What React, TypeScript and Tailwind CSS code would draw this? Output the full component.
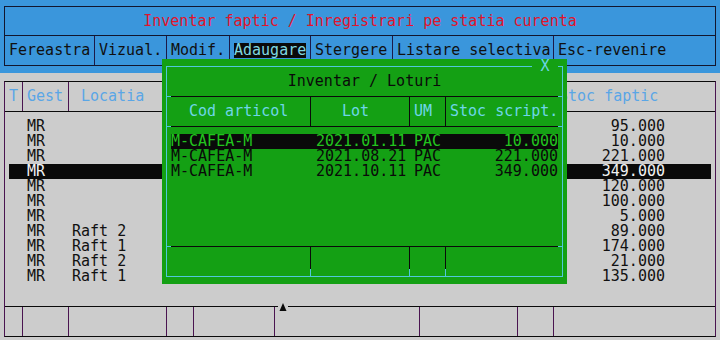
import React from "react";

const menu = [
  { label: "Fereastra", w: "w-[90px]" },
  { label: "Vizual.", w: "w-[72px]" },
  { label: "Modif.", w: "w-[63px]" },
  { label: "Adaugare", w: "w-[81px]", active: true },
  { label: "Stergere", w: "w-[82px]" },
  { label: "Listare selectiva", w: "w-[161px]" },
];

const stock = [
  { gest: "MR", loc: "", qty: "95.000" },
  { gest: "MR", loc: "", qty: "10.000" },
  { gest: "MR", loc: "", qty: "221.000" },
  { gest: "MR", loc: "", qty: "349.000" },
  { gest: "MR", loc: "", qty: "120.000" },
  { gest: "MR", loc: "", qty: "100.000" },
  { gest: "MR", loc: "", qty: "5.000" },
  { gest: "MR", loc: "Raft 2", qty: "89.000" },
  { gest: "MR", loc: "Raft 1", qty: "174.000" },
  { gest: "MR", loc: "Raft 2", qty: "21.000" },
  { gest: "MR", loc: "Raft 1", qty: "135.000" },
];

const lots = [
  { cod: "M-CAFEA-M", lot: "2021.01.11", um: "PAC", stoc: "10.000" },
  { cod: "M-CAFEA-M", lot: "2021.08.21", um: "PAC", stoc: "221.000" },
  { cod: "M-CAFEA-M", lot: "2021.10.11", um: "PAC", stoc: "349.000" },
];

// footer column widths of the main grid (each includes its right border)
const footerCols = ["w-[18px]", "w-[46px]", "w-[98px]", "w-[27px]", "w-[81px]", "w-[145px]", "w-[98px]", "w-[36px]"];

function Rule() {
  return (
    <div className="flex h-px">
      <div className="w-[4px] bg-[#50c8dc]" />
      <div className="flex-1 bg-[#0a0a0a]" />
      <div className="w-[4px] bg-[#50c8dc]" />
    </div>
  );
}

function FootSep() {
  return (
    <div className="flex w-px flex-col">
      <div className="h-[22px] bg-[#0a0a0a]" />
      <div className="flex-1 bg-[#50c8dc]" />
    </div>
  );
}

function LotsDialog() {
  return (
    <div className="absolute left-[162px] top-[59px] h-[225px] w-[405px] bg-[#14a014] pt-[7px] pl-[4px]">
      <div className="relative flex h-[211px] w-[397px] flex-col border border-[#50c8dc]">
        <span className="absolute left-[365px] top-[-8px] h-[15px] w-[26px] bg-[#14a014] text-center text-[#6fd6e8]">
          X
        </span>
        <div className="flex h-[29px] items-center justify-center text-[#0a0a0a]">Inventar / Loturi</div>
        <Rule />
        <div className="flex h-[29px] items-center text-[#6fd6e8]">
          <div className="flex h-full w-[144px] items-center border-r border-[#0a0a0a] pl-[22px]">Cod articol</div>
          <div className="flex h-full w-[99px] items-center border-r border-[#0a0a0a] pl-[31px]">Lot</div>
          <div className="flex h-full w-[36px] items-center border-r border-[#0a0a0a] pl-[4px]">UM</div>
          <div className="flex h-full flex-1 items-center pl-[4px]">Stoc script.</div>
        </div>
        <Rule />
        <div className="h-[119px] px-[4px] pt-[7px]">
          {lots.map((r, i) => (
            <div
              key={i}
              className={`flex h-[15px] whitespace-pre ${i === 0 ? "bg-[#0a0a0a] text-[#22c41e]" : "text-[#0a0a0a]"}`}
            >
              <span className="w-[145px]">{r.cod}</span>
              <span className="w-[98px]">{r.lot}</span>
              <span className="w-[36px]">{r.um}</span>
              <span className="flex-1 text-right">{r.stoc}</span>
            </div>
          ))}
        </div>
        <Rule />
        <div className="flex h-[29px]">
          <div className="w-[143px]" />
          <FootSep />
          <div className="w-[98px]" />
          <FootSep />
          <div className="w-[35px]" />
          <FootSep />
          <div className="flex-1" />
        </div>
      </div>
    </div>
  );
}

export default function App() {
  return (
    <div className="relative h-[340px] w-[720px] overflow-hidden bg-[#cccccc] font-['DejaVu_Sans_Mono','Liberation_Mono',monospace] text-[15px] leading-[15px] text-[#111111]">
      <div className="h-[73px] bg-[#3a96dc] pt-[6px] pl-[4px]">
        <div className="w-[712px] border border-[#12162e]">
          <div className="flex h-[29px] items-center justify-center border-b border-[#12162e] text-[#e0142c]">
            Inventar faptic / Inregistrari pe statia curenta
          </div>
          <div className="flex h-[29px] text-[#101010]">
            {menu.map((m) => (
              <div key={m.label} className={`flex items-center border-r border-[#1c1a48] pl-[4px] ${m.w}`}>
                <span className={m.active ? "bg-[#0a0a0a] text-[#80d8e0]" : ""}>{m.label}</span>
              </div>
            ))}
            <div className="flex flex-1 items-center pl-[4px]">Esc-revenire</div>
          </div>
        </div>
      </div>

      <div className="ml-[4px] mt-[8px] flex h-[256px] w-[712px] flex-col border-x border-y border-x-[#4a1450] border-y-[#0a0a0a]">
        <div className="flex h-[30px] border-b border-[#0a0a0a] text-[#5aa6e6]">
          <div className="flex w-[18px] items-center border-r border-[#4a1450] pl-[4px]">T</div>
          <div className="flex w-[46px] items-center border-r border-[#4a1450] pl-[4px]">Gest</div>
          <div className="flex w-[485px] items-center pl-[12px]">Locatia</div>
          <div className="flex flex-1 items-center pl-[5px]">Stoc faptic</div>
        </div>
        <div className="h-[194px] px-[4px] pt-[7px]">
          {stock.map((r, i) => (
            <div
              key={i}
              className={`flex h-[15px] whitespace-pre ${i === 3 ? "bg-[#0a0a0a] text-[#f2f2f2]" : ""}`}
            >
              <span className="w-[18px]" />
              <span className="w-[45px]">{r.gest}</span>
              <span className="w-[120px]">{r.loc}</span>
              <span className="flex-1 pr-[46px] text-right">{r.qty}</span>
            </div>
          ))}
        </div>
        <div className="relative flex h-[30px] border-t border-[#0a0a0a]">
          {footerCols.map((w, i) => (
            <div key={i} className={`${w} border-r border-[#4a1450]`} />
          ))}
          <div className="flex-1" />
          <svg className="absolute left-[273px] top-[-5px] bg-[#cccccc]" width="10" height="10" viewBox="0 0 10 10">
            <polygon points="5,1 8.5,9 1.5,9" fill="#0a0a0a" />
          </svg>
        </div>
      </div>

      <LotsDialog />
    </div>
  );
}
